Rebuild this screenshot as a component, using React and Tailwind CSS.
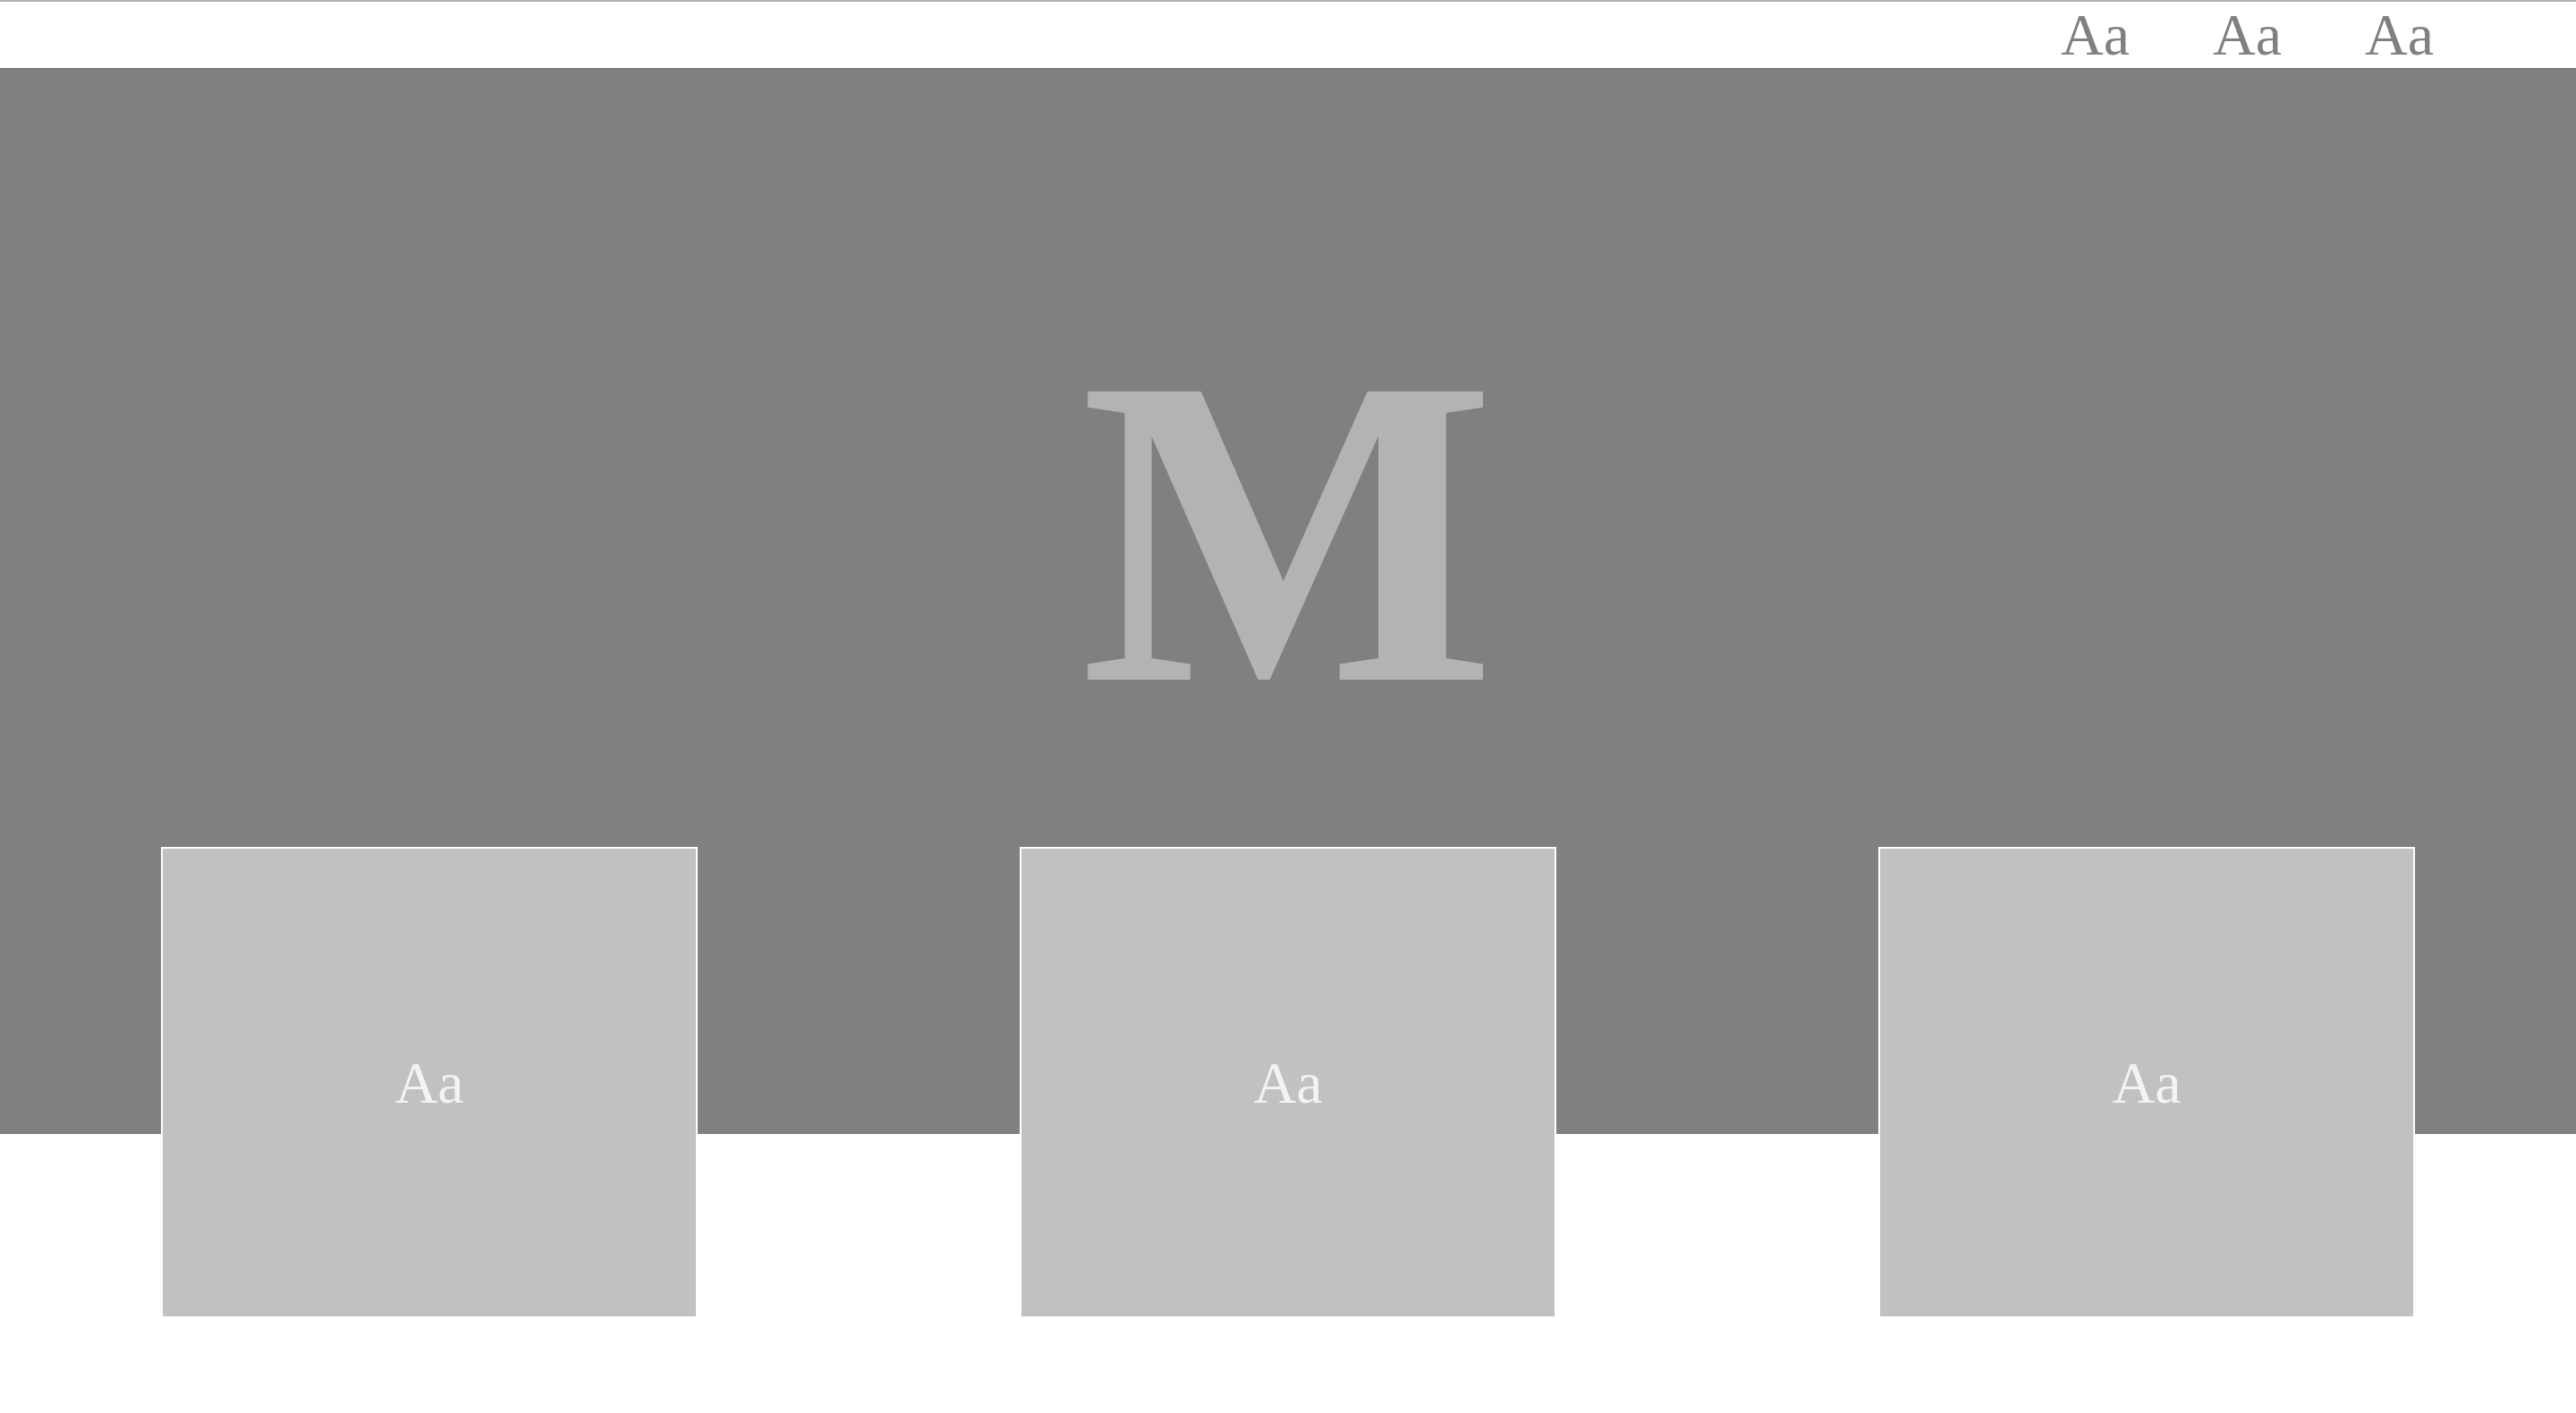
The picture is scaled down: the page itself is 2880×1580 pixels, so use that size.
export default function App() {
  const serif = { fontFamily: '"Liberation Serif", "Times New Roman", serif' };
  return (
    <div className="min-h-[1580px] w-full bg-white" style={serif}>
      {/* TOP NAV */}
      <header className="h-[76px] border-t-2 border-[#b0b0b4] bg-white flex items-center justify-end gap-[93px] pr-[159px]">
        {['Aa', 'Aa', 'Aa'].map((t, i) => (
          <span key={i} className="text-[66px] leading-none text-[#808080]">{t}</span>
        ))}
      </header>

      {/* HERO */}
      <section className="h-[1192px] bg-[#808080] flex justify-center pt-[272px]">
        <span className="text-[492px] leading-none font-bold text-[#b3b3b3]">M</span>
      </section>

      {/* CARDS */}
      <div className="-mt-[321px] px-[180px] flex justify-between">
        {[1, 2, 3].map(n => (
          <div key={n} className="w-[600px] h-[527px] bg-[#c1c1c1] border-2 border-white flex items-center justify-center">
            <span className="text-[66px] leading-none text-[#f3f3f3]">Aa</span>
          </div>
        ))}
      </div>
    </div>
  );
}
